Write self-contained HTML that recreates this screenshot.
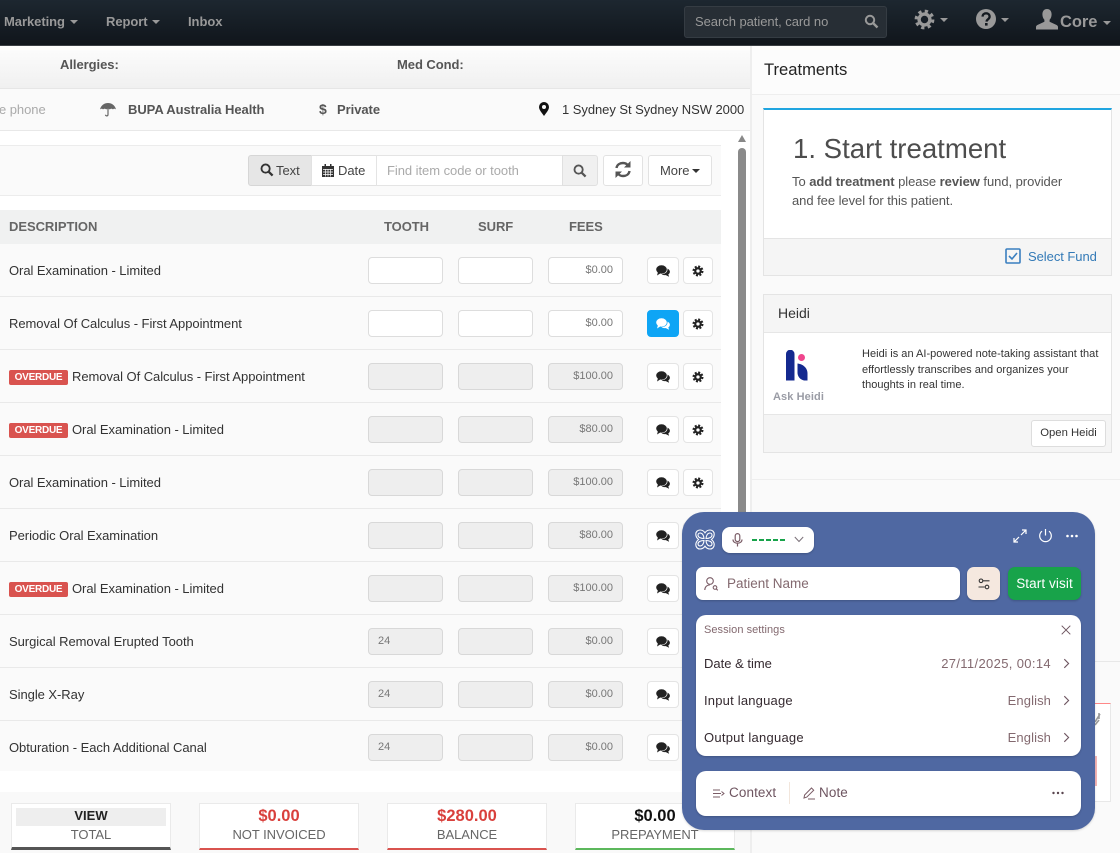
<!DOCTYPE html>
<html><head><meta charset="utf-8">
<style>
html,body{margin:0;padding:0;width:1120px;height:853px;overflow:hidden;background:#fff}
body{font-family:"Liberation Sans",sans-serif;font-size:13px;color:#333;position:relative;letter-spacing:-.05px}
.a{position:absolute}
.t{position:absolute;white-space:nowrap}
.row{position:absolute;left:0;width:721px;height:53px;background:#fafafa;border-bottom:1px solid #e9e9e9;box-sizing:border-box}
.row .d{position:absolute;left:9px;top:19px;line-height:16px;white-space:nowrap;color:#333}
.lab{display:inline-block;background:#d9534f;color:#fff;font-weight:bold;font-size:10px;line-height:15px;height:15px;padding:0 5px;border-radius:2px;margin-right:4px;vertical-align:1px;width:49px;text-align:center;letter-spacing:-.25px}
.i{position:absolute;top:13px;width:75px;height:27px;box-sizing:border-box;border:1px solid #ddd;border-radius:4px;background:#fff;font-size:11px;color:#777;line-height:24px;letter-spacing:0}
.i.g{background:#eee;border-color:#d8d8d8}
.i.s{left:368px;padding-left:9px}.i.u{left:458px}.i.f{left:548px;text-align:right;padding-right:9px}
.b{position:absolute;top:13px;height:27px;box-sizing:border-box;border:1px solid #e4e4e4;border-radius:4px;background:#fff}
.b.c{left:647px;width:32px}.b.k{left:683px;width:30px}
.b svg{position:absolute;left:50%;top:50%;transform:translate(-50%,-50%)}
.b.on{background:#0ea5f5;border-color:#0ea5f5}
.nav{color:#999;font-weight:bold;font-size:13px}
.car{position:absolute;width:0;height:0;border-left:4px solid transparent;border-right:4px solid transparent;border-top:4px solid #999}
.sc{position:absolute;top:803px;width:160px;height:47px;box-sizing:border-box;background:#fff;border:1px solid #eaeaea;text-align:center}
.sc b{display:block;font-size:16.5px;line-height:20px;margin-top:2px;letter-spacing:0}
.sc span{display:block;font-size:13px;line-height:18px;color:#666;letter-spacing:-.05px}
.w{font-family:"Liberation Sans",sans-serif;color:#6e5560}
</style></head><body>

<!-- navbar -->
<div class="a" style="left:0;top:0;width:1120px;height:45px;background:linear-gradient(#1d2730,#10151b);border-bottom:1px solid #3a3f44;box-sizing:content-box"></div>
<div class="t nav" style="left:4px;top:14px">Marketing</div><div class="car" style="left:70px;top:20px"></div>
<div class="t nav" style="left:106px;top:14px">Report</div><div class="car" style="left:152px;top:20px"></div>
<div class="t nav" style="left:188px;top:14px">Inbox</div>
<div class="a" style="left:684px;top:6px;width:203px;height:32px;box-sizing:border-box;background:#272e35;border:1px solid #353c43;border-radius:3px"></div>
<div class="t" style="left:695px;top:14px;color:#999;font-size:13px">Search patient, card no</div>
<svg class="a" style="left:864px;top:14px" width="15" height="15" viewBox="0 0 15 15"><circle cx="6" cy="6" r="4.2" fill="none" stroke="#999" stroke-width="2"/><path d="M9 9l4.5 4.5" stroke="#999" stroke-width="2.4"/></svg>
<svg class="a" style="left:914px;top:9px" width="21" height="21" viewBox="0 0 21 21"><circle cx="10.5" cy="10.5" r="8.2" fill="none" stroke="#999" stroke-width="3.4" stroke-dasharray="3.2 3.24"/><circle cx="10.5" cy="10.5" r="5.4" fill="none" stroke="#999" stroke-width="3.4"/></svg>
<div class="car" style="left:940px;top:18px"></div>
<svg class="a" style="left:976px;top:9px" width="20" height="20" viewBox="0 0 20 20"><circle cx="10" cy="10" r="10" fill="#999"/><path d="M6.600 7.600c0-4.400 7-4.400 7 0 0 2.800-3 2.600-3 5" fill="none" stroke="#141a20" stroke-width="2.300"/><rect x="9" y="14" width="2.600" height="2.600" fill="#141a20"/></svg>
<div class="car" style="left:1001px;top:18px"></div>
<svg class="a" style="left:1036px;top:9px" width="22" height="21" viewBox="0 0 22 21"><path d="M11 0c3 0 4.600 2.300 4.600 5.500 0 2.300-1 4.200-2 5.300v2l7 3.200c.8.400 1.400 1.200 1.400 2V20.500H0V18c0-.8.600-1.600 1.400-2l7-3.200v-2c-1-1.100-2-3-2-5.300C6.400 2.300 8 0 11 0z" fill="#999"/></svg>
<div class="t" style="left:1060px;top:13px;color:#999;font-weight:bold;font-size:16.500px">Core</div>
<div class="car" style="left:1103px;top:21px"></div>

<!-- left top bars -->
<div class="a" style="left:0;top:46px;width:750px;height:42px;background:linear-gradient(#fdfdfd,#f0f0f0);border-bottom:1px solid #e6e6e6"></div>
<div class="t" style="left:60px;top:57px;font-weight:bold;color:#555">Allergies:</div>
<div class="t" style="left:397px;top:57px;font-weight:bold;color:#555">Med Cond:</div>
<div class="a" style="left:0;top:89px;width:750px;height:41px;background:#fafafa;border-bottom:1px solid #e8e8e8"></div>
<div class="t" style="left:-1px;top:102px;color:#aaa">e phone</div>
<svg class="a" style="left:100px;top:102px" width="16" height="15" viewBox="0 0 16 15"><path d="M0 7.500C1 3 4.500 1 8 1s7 2 8 6.500c-1-1-2.500-1-3 0-.8-1-2.400-1-3.200 0-.5-.6-1.200-.8-1.800-.8s-1.300.2-1.800.8c-.8-1-2.400-1-3.200 0-.5-1-2-1-3 0z" fill="#666"/><path d="M8 6.500v6c0 1.800-2.500 1.800-2.500.2" fill="none" stroke="#666" stroke-width="1.200"/></svg>
<div class="t" style="left:128px;top:102px;font-weight:bold;color:#555">BUPA Australia Health</div>
<div class="t" style="left:319px;top:101px;font-weight:bold;color:#555;font-size:14px">$</div>
<div class="t" style="left:337px;top:102px;font-weight:bold;color:#555">Private</div>
<svg class="a" style="left:539px;top:102px" width="10" height="14" viewBox="0 0 10 14"><path d="M5 0a5 5 0 0 1 5 5c0 3-3 6-5 9-2-3-5-6-5-9a5 5 0 0 1 5-5z" fill="#111"/><circle cx="5" cy="5" r="2" fill="#fafafa"/></svg>
<div class="t" style="left:562px;top:102px;color:#333">1 Sydney St Sydney NSW 2000</div>

<!-- toolbar -->
<div class="a" style="left:0;top:145px;width:721px;height:49px;background:#fafafa;border-top:1px solid #ececec;border-bottom:1px solid #ececec"></div>
<div class="a" style="left:248px;top:155px;width:64px;height:31px;box-sizing:border-box;background:#e6e6e6;border:1px solid #d6d6d6;border-radius:3px 0 0 3px"></div>
<svg class="a" style="left:260px;top:163px" width="14" height="14" viewBox="0 0 15 15"><circle cx="6" cy="6" r="4.400" fill="none" stroke="#333" stroke-width="2"/><path d="M9 9l4.500 4.500" stroke="#333" stroke-width="2.400"/></svg>
<div class="t" style="left:276px;top:163px;color:#444">Text</div>
<div class="a" style="left:311px;top:155px;width:66px;height:31px;box-sizing:border-box;background:#fff;border:1px solid #e2e2e2"></div>
<svg class="a" style="left:322px;top:164px" width="12" height="13" viewBox="0 0 12 13"><path d="M0 2h2.500V0h1.500v2h4V0h1.500v2H12v11H0z" fill="#333"/><path d="M1 5.500h10M1 8h10M1 10.500h10M3.500 5v7.500M6 5v7.500M8.500 5v7.500" stroke="#fff" stroke-width=".7"/></svg>
<div class="t" style="left:338px;top:163px;color:#444">Date</div>
<div class="a" style="left:376px;top:155px;width:187px;height:31px;box-sizing:border-box;background:#fff;border:1px solid #e4e4e4"></div>
<div class="t" style="left:387px;top:163px;color:#aaa">Find item code or tooth</div>
<div class="a" style="left:562px;top:155px;width:36px;height:31px;box-sizing:border-box;background:#f0f0f0;border:1px solid #e0e0e0;border-radius:0 3px 3px 0"></div>
<svg class="a" style="left:573px;top:164px" width="14" height="14" viewBox="0 0 15 15"><circle cx="6" cy="6" r="4.400" fill="none" stroke="#555" stroke-width="2"/><path d="M9 9l4.500 4.500" stroke="#555" stroke-width="2.400"/></svg>
<div class="a" style="left:603px;top:155px;width:40px;height:31px;box-sizing:border-box;background:#fff;border:1px solid #e2e2e2;border-radius:3px"></div>
<svg class="a" style="left:614px;top:160px" width="18" height="19" viewBox="0 0 18 19"><path d="M2.500 8C3 4.500 6 3 9 3c2.500 0 4 1 5 2.500" fill="none" stroke="#555" stroke-width="2.400"/><path d="M16.500 1v6.500H10z" fill="#555"/><path d="M15.500 11c-.5 3.500-3.500 5-6.500 5-2.500 0-4-1-5-2.500" fill="none" stroke="#555" stroke-width="2.400"/><path d="M1.500 18v-6.500H8z" fill="#555"/></svg>
<div class="a" style="left:648px;top:155px;width:64px;height:31px;box-sizing:border-box;background:#fff;border:1px solid #e2e2e2;border-radius:3px"></div>
<div class="t" style="left:660px;top:163px;color:#444">More</div>
<div class="car" style="left:692px;top:169px;border-top-color:#333"></div>

<!-- table header -->
<div class="a" style="left:0;top:210px;width:721px;height:34px;background:#f0f1f1"></div>
<div class="t" style="left:9px;top:219px;font-weight:bold;color:#666">DESCRIPTION</div>
<div class="t" style="left:384px;top:219px;font-weight:bold;color:#666">TOOTH</div>
<div class="t" style="left:478px;top:219px;font-weight:bold;color:#666">SURF</div>
<div class="t" style="left:569px;top:219px;font-weight:bold;color:#666">FEES</div>

<svg width="0" height="0" style="position:absolute"><defs>
<symbol id="cm" viewBox="0 0 14 12"><ellipse cx="5.500" cy="4.500" rx="5.300" ry="4.200"/><path d="M2 7l-1 3.500L5 8z"/><path d="M11.500 3.600c1.500.7 2.400 1.900 2.400 3.100 0 1.100-.6 2-1.600 2.700l.8 2.400-3.300-1.700c-1.600.2-3.200-.2-4.200-1 3.500 0 6.200-2 5.900-5.500z"/></symbol>
<symbol id="cg" viewBox="0 0 12 12"><circle cx="6" cy="6" r="4.900" fill="none" stroke="#222" stroke-width="2.200" stroke-dasharray="2.200 1.649"/><circle cx="6" cy="6" r="4.200" fill="#222"/><circle cx="6" cy="6" r="1.800" fill="#fff"/></symbol>
</defs></svg>

<!-- rows -->
<div class="row" style="top:244px"><div class="d">Oral Examination - Limited</div><div class="i s"></div><div class="i u"></div><div class="i f">$0.00</div><div class="b c"><svg width="14" height="12" fill="#222"><use href="#cm"/></svg></div><div class="b k"><svg width="11" height="11"><use href="#cg"/></svg></div></div>
<div class="row" style="top:297px"><div class="d">Removal Of Calculus - First Appointment</div><div class="i s"></div><div class="i u"></div><div class="i f">$0.00</div><div class="b c on"><svg width="14" height="12" fill="#fff"><use href="#cm"/></svg></div><div class="b k"><svg width="11" height="11"><use href="#cg"/></svg></div></div>
<div class="row" style="top:350px"><div class="d"><span class="lab">OVERDUE</span>Removal Of Calculus - First Appointment</div><div class="i s g"></div><div class="i u g"></div><div class="i f g">$100.00</div><div class="b c"><svg width="14" height="12" fill="#222"><use href="#cm"/></svg></div><div class="b k"><svg width="11" height="11"><use href="#cg"/></svg></div></div>
<div class="row" style="top:403px"><div class="d"><span class="lab">OVERDUE</span>Oral Examination - Limited</div><div class="i s g"></div><div class="i u g"></div><div class="i f g">$80.00</div><div class="b c"><svg width="14" height="12" fill="#222"><use href="#cm"/></svg></div><div class="b k"><svg width="11" height="11"><use href="#cg"/></svg></div></div>
<div class="row" style="top:456px"><div class="d">Oral Examination - Limited</div><div class="i s g"></div><div class="i u g"></div><div class="i f g">$100.00</div><div class="b c"><svg width="14" height="12" fill="#222"><use href="#cm"/></svg></div><div class="b k"><svg width="11" height="11"><use href="#cg"/></svg></div></div>
<div class="row" style="top:509px"><div class="d">Periodic Oral Examination</div><div class="i s g"></div><div class="i u g"></div><div class="i f g">$80.00</div><div class="b c"><svg width="14" height="12" fill="#222"><use href="#cm"/></svg></div><div class="b k"><svg width="11" height="11"><use href="#cg"/></svg></div></div>
<div class="row" style="top:562px"><div class="d"><span class="lab">OVERDUE</span>Oral Examination - Limited</div><div class="i s g"></div><div class="i u g"></div><div class="i f g">$100.00</div><div class="b c"><svg width="14" height="12" fill="#222"><use href="#cm"/></svg></div></div>
<div class="row" style="top:615px"><div class="d">Surgical Removal Erupted Tooth</div><div class="i s g">24</div><div class="i u g"></div><div class="i f g">$0.00</div><div class="b c"><svg width="14" height="12" fill="#222"><use href="#cm"/></svg></div></div>
<div class="row" style="top:668px"><div class="d">Single X-Ray</div><div class="i s g">24</div><div class="i u g"></div><div class="i f g">$0.00</div><div class="b c"><svg width="14" height="12" fill="#222"><use href="#cm"/></svg></div></div>
<div class="row" style="top:721px;height:50px;border-bottom:0"><div class="d">Obturation - Each Additional Canal</div><div class="i s g">24</div><div class="i u g"></div><div class="i f g">$0.00</div><div class="b c"><svg width="14" height="12" fill="#222"><use href="#cm"/></svg></div></div>

<!-- scrollbar -->
<div class="a" style="left:738px;top:135px;width:0;height:0;border-left:4px solid transparent;border-right:4px solid transparent;border-bottom:7px solid #888"></div>
<div class="a" style="left:738px;top:148px;width:8px;height:365px;background:#8a8a8a;border-radius:4px 4px 0 0"></div>

<!-- bottom summary -->
<div class="a" style="left:0;top:792px;width:750px;height:61px;background:#f9f9f9"></div>
<div class="sc" style="left:11px;border-bottom:3px solid #555"><div class="a" style="left:4px;top:4px;width:150px;height:18px;background:#eee"></div><b style="position:relative;font-size:13px;color:#222;margin-top:2px">VIEW</b><span style="position:relative;margin-top:0">TOTAL</span></div>
<div class="sc" style="left:199px;border-bottom:2px solid #d9534f"><b style="color:#d9403c">$0.00</b><span>NOT INVOICED</span></div>
<div class="sc" style="left:387px;border-bottom:2px solid #d9534f"><b style="color:#d9403c">$280.00</b><span>BALANCE</span></div>
<div class="sc" style="left:575px;border-bottom:2px solid #5cb85c"><b style="color:#111">$0.00</b><span>PREPAYMENT</span></div>

<!-- right panel -->
<div class="a" style="left:750px;top:46px;width:370px;height:807px;background:#fafafa;border-left:2px solid #eee;box-sizing:border-box"></div>
<div class="a" style="left:752px;top:46px;width:368px;height:48px;background:#fcfcfc;border-bottom:1px solid #eee"></div>
<div class="t" style="left:764px;top:60px;font-size:16.600px;color:#222;letter-spacing:0">Treatments</div>

<div class="a" style="left:763px;top:108px;width:349px;height:168px;box-sizing:border-box;background:#fff;border:1px solid #e4e4e4;border-top:2px solid #1fa5e0"></div>
<div class="a" style="left:764px;top:238px;width:347px;height:37px;background:#f5f5f5;border-top:1px solid #e4e4e4;box-sizing:border-box"></div>
<div class="t" style="left:793px;top:132px;font-size:27.600px;line-height:34px;color:#4d4d4d;letter-spacing:0">1. Start treatment</div>
<div class="t" style="left:792px;top:173px;line-height:18.500px;color:#555">To <b>add treatment</b> please <b>review</b> fund, provider<br>and fee level for this patient.</div>
<svg class="a" style="left:1005px;top:248px" width="16" height="16" viewBox="0 0 16 16"><rect x="1" y="1" width="14" height="14" rx="1" fill="none" stroke="#3a7fc0" stroke-width="1.600"/><path d="M4 8l3 3 5-6" fill="none" stroke="#3a7fc0" stroke-width="1.600"/></svg>
<div class="t" style="left:1028px;top:249px;color:#337ab7">Select Fund</div>

<div class="a" style="left:763px;top:294px;width:349px;height:159px;box-sizing:border-box;background:#fff;border:1px solid #e4e4e4"></div>
<div class="a" style="left:764px;top:295px;width:347px;height:38px;background:#f5f5f5;border-bottom:1px solid #e6e6e6;box-sizing:border-box"></div>
<div class="t" style="left:778px;top:305px;font-size:14px;color:#333;letter-spacing:0">Heidi</div>
<svg class="a" style="left:786px;top:350px" width="22" height="31" viewBox="0 0 22 31"><path d="M0 4a4 4 0 0 1 8.500 0v26.500H0z" fill="#14298f"/><path d="M11.500 13.500c5 .5 10 4 10 10v7h-3.500c-4-1-6.500-4-6.500-8z" fill="#14298f"/><circle cx="15.500" cy="7.500" r="3.500" fill="#f0468d"/></svg>
<div class="t" style="left:773px;top:391px;font-size:11px;font-weight:bold;color:#9a9ca5;letter-spacing:.1px">Ask Heidi</div>
<div class="t" style="left:862px;top:347px;font-size:11px;line-height:15.500px;color:#333;letter-spacing:.02px">Heidi is an AI-powered note-taking assistant that<br>effortlessly transcribes and organizes your<br>thoughts in real time.</div>
<div class="a" style="left:764px;top:414px;width:347px;height:38px;background:#f5f5f5;border-top:1px solid #e6e6e6;box-sizing:border-box"></div>
<div class="a" style="left:1031px;top:420px;width:75px;height:27px;box-sizing:border-box;background:#fff;border:1px solid #ddd;border-radius:3px;font-size:11.300px;line-height:25px;text-align:center;color:#333;letter-spacing:0">Open Heidi</div>
<div class="a" style="left:752px;top:479px;width:368px;height:1px;background:#eee"></div>

<!-- behind widget -->
<div class="a" style="left:1095px;top:661px;width:25px;height:1px;background:#e8e8e8"></div>
<div class="a" style="left:1095px;top:703px;width:16px;height:99px;box-sizing:border-box;background:#fff;border-right:1px solid #e8e8e8;border-bottom:1px solid #e8e8e8;border-top:1px solid #f88"></div>
<div class="a" style="left:1095px;top:756px;width:2px;height:30px;background:#f5b5b5"></div>
<svg class="a" style="left:1095px;top:712px" width="6" height="14" viewBox="0 0 6 14"><path d="M0 10L5 2M4 1v6M0 13l4-5" stroke="#999" stroke-width="1.600" fill="none"/></svg>

<!-- widget -->
<div class="a" style="left:682px;top:512px;width:413px;height:318px;background:#4f68a2;border-radius:22px;box-shadow:0 1px 2px rgba(0,0,0,.15)"></div>
<svg class="a" style="left:695px;top:529px" width="20" height="21" viewBox="0 0 20 21" fill="none" stroke="#fff" stroke-width="1.100"><path d="M10 3.800C8.800 2 7 1 5 1 2.600 1 .8 2.800.8 5.200c0 2.200 1.200 4 2.800 5.300C2 11.800.8 13.600.8 15.800c0 2.400 1.800 4.200 4.200 4.200 2 0 3.800-1 5-2.800 1.200 1.800 3 2.800 5 2.800 2.400 0 4.200-1.800 4.200-4.200 0-2.200-1.200-4-2.800-5.300 1.600-1.300 2.800-3.100 2.800-5.300C19.200 2.800 17.400 1 15 1c-2 0-3.800 1-5 2.800z"/><path d="M9 9.500c-.2-3-1.600-5.500-3.900-5.500C3.800 4 3 5 3 6.200 3 8.200 5.800 9.500 9 9.500zM11 9.500c.2-3 1.600-5.500 3.900-5.500C16.200 4 17 5 17 6.200 17 8.200 14.200 9.500 11 9.500zM9 11.500c-.2 3-1.600 5.500-3.900 5.500C3.800 17 3 16 3 14.800 3 12.800 5.800 11.500 9 11.500zM11 11.500c.2 3 1.600 5.500 3.900 5.500C16.200 17 17 16 17 14.800 17 12.800 14.200 11.500 11 11.500z"/></svg>
<div class="a" style="left:722px;top:527px;width:92px;height:26px;background:#fff;border-radius:8px;box-shadow:0 1px 2px rgba(0,0,0,.2)"></div>
<svg class="a" style="left:732px;top:533px" width="11" height="14" viewBox="0 0 11 14" fill="none" stroke="#7a5c66" stroke-width="1.200"><rect x="3.200" y=".6" width="4.600" height="8" rx="2.300"/><path d="M1 6.500c0 5 9 5 9 0M5.500 10.500V13.500"/></svg>
<div class="a" style="left:752px;top:539px;width:33px;height:2px;background:repeating-linear-gradient(90deg,#18a34a 0 5px,transparent 5px 7px)"></div>
<svg class="a" style="left:794px;top:536px" width="10" height="7" viewBox="0 0 10 7"><path d="M.8 1l4.200 4.500L9.200 1" fill="none" stroke="#7a7078" stroke-width="1"/></svg>
<svg class="a" style="left:1013px;top:529px" width="14" height="14" viewBox="0 0 14 14" fill="none" stroke="#fff" stroke-width="1.200"><path d="M8 6l5-5M9 1h4v4M6 8l-5 5M1 9v4h4"/></svg>
<svg class="a" style="left:1038px;top:528px" width="15" height="15" viewBox="0 0 15 15" fill="none" stroke="#fff" stroke-width="1.200"><path d="M7.500 1v6.500M4 3.200a5.800 5.800 0 1 0 7 0"/></svg>
<svg class="a" style="left:1066px;top:534px" width="12" height="4" viewBox="0 0 12 4" fill="#fff"><circle cx="1.500" cy="2" r="1.300"/><circle cx="6" cy="2" r="1.300"/><circle cx="10.500" cy="2" r="1.300"/></svg>

<div class="a" style="left:696px;top:567px;width:264px;height:33px;background:#fff;border-radius:7px;box-shadow:0 1px 2px rgba(0,0,0,.2)"></div>
<svg class="a" style="left:704px;top:577px" width="15" height="14" viewBox="0 0 15 14" fill="none" stroke="#7a5c66" stroke-width="1.100"><circle cx="6" cy="4" r="3.300"/><path d="M.8 13c0-3 2-5 5-5"/><circle cx="11" cy="10.500" r="1.800"/><path d="M12.300 12l1.500 1.300"/></svg>
<div class="t w" style="left:727px;top:576px;font-size:13.500px;letter-spacing:0;color:#83696f">Patient Name</div>
<div class="a" style="left:967px;top:567px;width:33px;height:33px;background:#f5e8df;border-radius:7px;box-shadow:0 1px 2px rgba(0,0,0,.2)"></div>
<svg class="a" style="left:978px;top:578px" width="12" height="12" viewBox="0 0 12 12" fill="none" stroke="#333" stroke-width="1.100"><circle cx="3" cy="2.800" r="1.800"/><path d="M5 2.800h6.500M.5 9h6"/><circle cx="9" cy="9" r="1.800"/></svg>
<div class="a" style="left:1008px;top:567px;width:73px;height:33px;background:#18a34a;border-radius:7px;box-shadow:0 1px 2px rgba(0,0,0,.2);color:#fff;font-size:13.500px;line-height:33px;text-align:center;letter-spacing:.1px">Start visit</div>

<div class="a" style="left:696px;top:615px;width:385px;height:141px;background:#fff;border-radius:10px;box-shadow:0 1px 2px rgba(0,0,0,.2)"></div>
<div class="t w" style="left:704px;top:624px;font-size:11px;color:#83696f;letter-spacing:.05px">Session settings</div>
<svg class="a" style="left:1061px;top:625px" width="10" height="10" viewBox="0 0 10 10"><path d="M.7.7l8.600 8.600M9.300.7L.7 9.300" stroke="#6e5560" stroke-width="1"/></svg>
<div class="t" style="left:704px;top:656px;color:#352a30;letter-spacing:0">Date &amp; time</div>
<div class="t w" style="right:69px;top:656px;color:#83696f;letter-spacing:.35px">27/11/2025, 00:14</div>
<div class="t" style="left:704px;top:693px;color:#352a30;letter-spacing:.2px">Input language</div>
<div class="t w" style="right:69px;top:693px;color:#83696f;letter-spacing:.1px">English</div>
<div class="t" style="left:704px;top:730px;color:#352a30;letter-spacing:.25px">Output language</div>
<div class="t w" style="right:69px;top:730px;color:#83696f;letter-spacing:.1px">English</div>
<svg class="a" style="left:1063px;top:658px" width="7" height="11" viewBox="0 0 7 11"><path d="M1.300 1.200l4.300 4.300-4.300 4.300" fill="none" stroke="#6e5560" stroke-width="1.100"/></svg>
<svg class="a" style="left:1063px;top:695px" width="7" height="11" viewBox="0 0 7 11"><path d="M1.300 1.200l4.300 4.300-4.300 4.300" fill="none" stroke="#6e5560" stroke-width="1.100"/></svg>
<svg class="a" style="left:1063px;top:732px" width="7" height="11" viewBox="0 0 7 11"><path d="M1.300 1.200l4.300 4.300-4.300 4.300" fill="none" stroke="#6e5560" stroke-width="1.100"/></svg>

<div class="a" style="left:696px;top:771px;width:385px;height:45px;background:#fff;border-radius:10px;box-shadow:0 1px 2px rgba(0,0,0,.2)"></div>
<svg class="a" style="left:713px;top:788px" width="12" height="11" viewBox="0 0 12 11" fill="none" stroke="#7a5c66" stroke-width="1"><path d="M0 2h7M0 5.500h8M0 9h7M8.500 3.500l2.500 2-2.500 2"/></svg>
<div class="t w" style="left:729px;top:785px;font-size:13.500px;letter-spacing:.1px">Context</div>
<div class="a" style="left:789px;top:782px;width:1px;height:22px;background:#f2e6dc"></div>
<svg class="a" style="left:803px;top:787px" width="12" height="13" viewBox="0 0 12 13" fill="none" stroke="#7a5c66" stroke-width="1"><path d="M1 11l.6-3L8.500 1l2.200 2.200-6.900 6.900zM5 12h7"/></svg>
<div class="t w" style="left:819px;top:785px;font-size:13.500px;letter-spacing:.1px">Note</div>
<svg class="a" style="left:1052px;top:791px" width="12" height="4" viewBox="0 0 12 4" fill="#5a464f"><circle cx="1.500" cy="2" r="1.200"/><circle cx="6" cy="2" r="1.200"/><circle cx="10.500" cy="2" r="1.200"/></svg>

</body></html>
